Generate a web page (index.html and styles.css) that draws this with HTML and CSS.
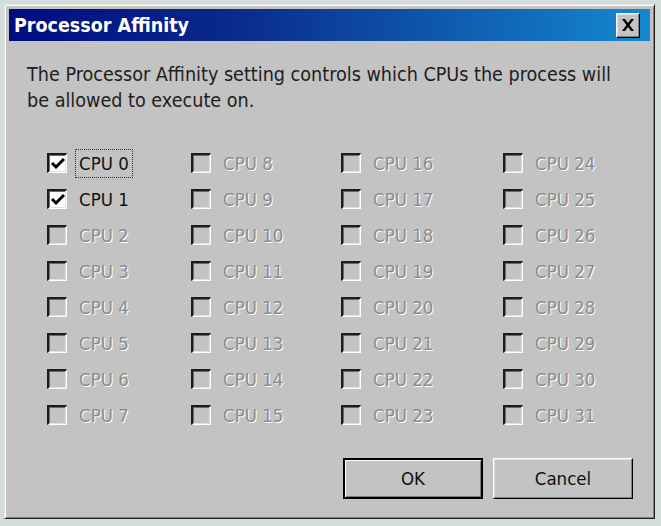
FILE: index.html
```html
<!DOCTYPE html>
<html>
<head>
<meta charset="utf-8">
<link rel="stylesheet" href="styles.css">
</head>
<body>
<div class="window">
  <div class="titlebar">
    <span class="title">Processor Affinity</span>
    <span class="close"><svg width="14" height="12" viewBox="0 0 14 12"><path d="M1 0 L4 0 L7 4 L10 0 L13 0 L8.5 6 L13 12 L10 12 L7 8 L4 12 L1 12 L5.5 6 Z" fill="#000"/></svg></span>
  </div>
  <div class="content">
    <p class="intro">The Processor Affinity setting controls which CPUs the process will be allowed to execute on.</p>
    <div class="grid">
      <div class="cb"><span class="box checked"><svg width="14" height="12" viewBox="0 0 14 12"><path d="M1 5 L5 9 L13 1" stroke="#000" stroke-width="3" fill="none"/></svg></span><span class="label focus">CPU 0</span></div>
      <div class="cb off"><span class="box"></span><span class="label">CPU 8</span></div>
      <div class="cb off"><span class="box"></span><span class="label">CPU 16</span></div>
      <div class="cb off"><span class="box"></span><span class="label">CPU 24</span></div>

      <div class="cb"><span class="box checked"><svg width="14" height="12" viewBox="0 0 14 12"><path d="M1 5 L5 9 L13 1" stroke="#000" stroke-width="3" fill="none"/></svg></span><span class="label">CPU 1</span></div>
      <div class="cb off"><span class="box"></span><span class="label">CPU 9</span></div>
      <div class="cb off"><span class="box"></span><span class="label">CPU 17</span></div>
      <div class="cb off"><span class="box"></span><span class="label">CPU 25</span></div>

      <div class="cb off"><span class="box"></span><span class="label">CPU 2</span></div>
      <div class="cb off"><span class="box"></span><span class="label">CPU 10</span></div>
      <div class="cb off"><span class="box"></span><span class="label">CPU 18</span></div>
      <div class="cb off"><span class="box"></span><span class="label">CPU 26</span></div>

      <div class="cb off"><span class="box"></span><span class="label">CPU 3</span></div>
      <div class="cb off"><span class="box"></span><span class="label">CPU 11</span></div>
      <div class="cb off"><span class="box"></span><span class="label">CPU 19</span></div>
      <div class="cb off"><span class="box"></span><span class="label">CPU 27</span></div>

      <div class="cb off"><span class="box"></span><span class="label">CPU 4</span></div>
      <div class="cb off"><span class="box"></span><span class="label">CPU 12</span></div>
      <div class="cb off"><span class="box"></span><span class="label">CPU 20</span></div>
      <div class="cb off"><span class="box"></span><span class="label">CPU 28</span></div>

      <div class="cb off"><span class="box"></span><span class="label">CPU 5</span></div>
      <div class="cb off"><span class="box"></span><span class="label">CPU 13</span></div>
      <div class="cb off"><span class="box"></span><span class="label">CPU 21</span></div>
      <div class="cb off"><span class="box"></span><span class="label">CPU 29</span></div>

      <div class="cb off"><span class="box"></span><span class="label">CPU 6</span></div>
      <div class="cb off"><span class="box"></span><span class="label">CPU 14</span></div>
      <div class="cb off"><span class="box"></span><span class="label">CPU 22</span></div>
      <div class="cb off"><span class="box"></span><span class="label">CPU 30</span></div>

      <div class="cb off"><span class="box"></span><span class="label">CPU 7</span></div>
      <div class="cb off"><span class="box"></span><span class="label">CPU 15</span></div>
      <div class="cb off"><span class="box"></span><span class="label">CPU 23</span></div>
      <div class="cb off"><span class="box"></span><span class="label">CPU 31</span></div>
    </div>
    <div class="buttons">
      <button class="btn default">OK</button>
      <button class="btn">Cancel</button>
    </div>
  </div>
</div>
</body>
</html>
```
FILE: styles.css
```css
html, body {
  margin: 0;
  padding: 0;
}
body {
  background: #d2dcdb;
  width: 661px;
  height: 526px;
  overflow: hidden;
  font-family: "DejaVu Sans Condensed", "DejaVu Sans", sans-serif;
}
.window {
  margin: 4px 0 0 4px;
  width: 651px;
  height: 515px;
  box-sizing: border-box;
  background: #c3c3c3;
  border-top: 1px solid #e4e4e4;
  border-left: 1px solid #e4e4e4;
  border-right: 1px solid #202020;
  border-bottom: 1px solid #202020;
  box-shadow: inset 1px 1px 0 #ffffff, inset -1px -1px 0 #808080;
  padding: 4px;
  display: flex;
  flex-direction: column;
}
.titlebar {
  height: 32px;
  flex: none;
  background: linear-gradient(to right, #000c80 0%, #0a2a8c 35%, #1488d2 100%);
  display: flex;
  align-items: center;
  justify-content: space-between;
  padding: 0 10px 0 5px;
}
.title {
  color: #fff;
  font-weight: bold;
  font-size: 19.5px;
}
.close {
  width: 24px;
  height: 25px;
  box-sizing: border-box;
  background: #c3c3c3;
  border-top: 1px solid #fff;
  border-left: 1px solid #fff;
  border-right: 1px solid #000;
  border-bottom: 1px solid #000;
  box-shadow: inset -1px -1px 0 #808080, inset 1px 1px 0 #dfdfdf;
  display: flex;
  align-items: center;
  justify-content: center;
}
.content {
  flex: 1;
  padding: 0 0 0 18px;
  display: flex;
  flex-direction: column;
}
.intro {
  margin: 21px 0 0 0;
  font-size: 19.6px;
  line-height: 26px;
  color: #1e1e1e;
  width: 610px;
}
.grid {
  margin: 31px 0 0 20px;
  display: grid;
  grid-template-columns: 144px 150px 162px auto;
  grid-auto-rows: 36px;
}
.cb {
  display: flex;
  align-items: center;
  gap: 8px;
  font-size: 18.5px;
  color: #111;
}
.box {
  width: 20px;
  height: 20px;
  flex: none;
  box-sizing: border-box;
  border-top: 2px solid #1c1c1c;
  border-left: 2px solid #1c1c1c;
  border-right: 1px solid #fff;
  border-bottom: 1px solid #fff;
  box-shadow: inset -1px -1px 0 #e0e0e0, inset 1px 1px 0 #6a6a6a;
  background: #c3c3c3;
  display: flex;
  align-items: center;
  justify-content: center;
}
.box.checked {
  background: #fff;
}
.label {
  padding: 3px 3px;
  border: 1px solid transparent;
}
.label.focus {
  border: 1px dotted #333;
}
.off .label {
  color: #8c8c8c;
  text-shadow: 1px 1px 0 #fff;
}
.buttons {
  margin-top: auto;
  margin-bottom: 15px;
  display: flex;
  justify-content: flex-end;
  gap: 10px;
  padding-right: 17px;
}
.btn {
  width: 140px;
  height: 41px;
  font-family: "DejaVu Sans Condensed", "DejaVu Sans", sans-serif;
  font-size: 18.5px;
  color: #111;
  background: #c3c3c3;
  box-sizing: border-box;
  border-top: 1px solid #fff;
  border-left: 1px solid #fff;
  border-right: 1px solid #000;
  border-bottom: 1px solid #000;
  box-shadow: inset -1px -1px 0 #808080, inset 1px 1px 0 #dfdfdf;
  padding: 0;
}
.btn.default {
  border: 2px solid #000;
  box-shadow: inset 1px 1px 0 #fff, inset -1px -1px 0 #808080;
}
```
